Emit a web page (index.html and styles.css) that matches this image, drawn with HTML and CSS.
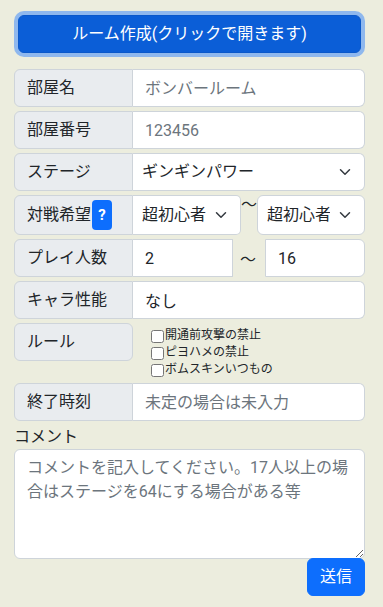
FILE: index.html
```html
<!DOCTYPE html>
<html lang="ja">
<head>
<meta charset="utf-8">
<title>ルーム作成</title>
<link rel="stylesheet" href="styles.css">
</head>
<body>
<div class="container">
  <button class="btn btn-toggle" type="button">ルーム作成(クリックで開きます)</button>
  <form class="form">
    <div class="input-group">
      <span class="group-text">部屋名</span>
      <input class="form-control" type="text" placeholder="ボンバールーム">
    </div>
    <div class="input-group">
      <span class="group-text">部屋番号</span>
      <input class="form-control" type="text" placeholder="123456">
    </div>
    <div class="input-group">
      <span class="group-text">ステージ</span>
      <span class="select-wrap full">
        <select class="form-select"><option>ギンギンパワー</option></select>
        <svg class="chev" viewBox="0 0 16 16" width="16" height="12"><path d="M2 5l6 6 6-6" fill="none" stroke="#343a40" stroke-width="2" stroke-linecap="round" stroke-linejoin="round"/></svg>
      </span>
    </div>
    <div class="input-group tall">
      <span class="group-text">対戦希望<span class="help">?</span></span>
      <span class="select-wrap half">
        <select class="form-select"><option>超初心者</option></select>
        <svg class="chev" viewBox="0 0 16 16" width="16" height="12"><path d="M2 5l6 6 6-6" fill="none" stroke="#343a40" stroke-width="2" stroke-linecap="round" stroke-linejoin="round"/></svg>
      </span>
      <span class="tilde top">〜</span>
      <span class="select-wrap half">
        <select class="form-select"><option>超初心者</option></select>
        <svg class="chev" viewBox="0 0 16 16" width="16" height="12"><path d="M2 5l6 6 6-6" fill="none" stroke="#343a40" stroke-width="2" stroke-linecap="round" stroke-linejoin="round"/></svg>
      </span>
    </div>
    <div class="input-group">
      <span class="group-text">プレイ人数</span>
      <input class="form-control num" type="text" value="2">
      <span class="tilde mid">〜</span>
      <input class="form-control num last" type="text" value="16">
    </div>
    <div class="input-group">
      <span class="group-text">キャラ性能</span>
      <input class="form-control" type="text" value="なし">
    </div>
    <div class="input-group rules">
      <span class="group-text solo">ルール</span>
      <div class="checks">
        <label class="check"><input type="checkbox">開通前攻撃の禁止</label>
        <label class="check"><input type="checkbox">ピヨハメの禁止</label>
        <label class="check"><input type="checkbox">ボムスキンいつもの</label>
      </div>
    </div>
    <div class="input-group">
      <span class="group-text">終了時刻</span>
      <input class="form-control" type="text" placeholder="未定の場合は未入力">
    </div>
    <label class="comment-label">コメント</label>
    <textarea class="form-control area" rows="4" placeholder="コメントを記入してください。17人以上の場合はステージを64にする場合がある等"></textarea>
    <div class="actions">
      <button class="btn btn-send" type="button">送信</button>
    </div>
  </form>
</div>
</body>
</html>
```

FILE: styles.css
```css
* { box-sizing: border-box; }
html, body {
  margin: 0;
  background: #ecedde;
}
body {
  font-family: Roboto, "Noto Sans CJK JP", sans-serif;
  font-size: 16px;
  line-height: 1.5;
  color: #212529;
}
.container {
  padding: 15px 18px 0 14px;
  width: 383px;
}
.btn {
  font: inherit;
  line-height: 24px;
  color: #fff;
  border-radius: 6px;
  padding: 6px 12px;
  cursor: pointer;
}
.btn-toggle {
  display: block;
  width: 343px;
  height: 38px;
  margin: 0 4px 16px 4px;
  background: #0b5ed7;
  border: 1px solid #0a58ca;
  box-shadow: 0 0 0 4px rgba(49, 132, 253, 0.5);
}
.form { width: 351px; }
.input-group {
  display: flex;
  align-items: stretch;
  margin-bottom: 4px;
}
.group-text {
  display: flex;
  align-items: center;
  width: 119px;
  flex: 0 0 119px;
  height: 38px;
  padding: 6px 12px;
  background: #e9ecef;
  border: 1px solid #ced4da;
  border-radius: 6px 0 0 6px;
  white-space: nowrap;
}
.group-text.solo { border-radius: 6px; }
.tall .group-text { height: 40px; }
.help {
  display: inline-flex;
  align-items: center;
  justify-content: center;
  width: 20px;
  height: 30px;
  margin-left: 1px;
  background: #0d6efd;
  color: #fff;
  border-radius: 4px;
  font-size: 15px;
  font-weight: bold;
}
.form-control, .form-select {
  font: inherit;
  line-height: 24px;
  color: #212529;
  background: #fff;
  border: 1px solid #ced4da;
  height: 38px;
  padding: 6px 12px;
}
.form-control::placeholder { color: #6c757d; opacity: 1; }
.input-group > .form-control {
  flex: 1 1 auto;
  min-width: 0;
  border-left: none;
  border-radius: 0 6px 6px 0;
}
.form-control.num {
  flex: 0 0 100px;
  width: 100px;
  border-radius: 0;
}
.form-control.num.last {
  border-left: 1px solid #ced4da;
  border-radius: 0 6px 6px 0;
}
.select-wrap {
  position: relative;
  display: flex;
}
.select-wrap.full { flex: 1 1 auto; }
.select-wrap.half { flex: 0 0 108px; width: 108px; }
.form-select {
  appearance: none;
  -webkit-appearance: none;
  width: 100%;
  height: 100%;
  padding-left: 9px;
  padding-right: 34px;
  border-left: none;
  border-radius: 0 6px 6px 0;
}
.tall .select-wrap.half:last-child .form-select {
  border-left: 1px solid #ced4da;
  border-radius: 6px;
}
.tall .select-wrap.half:nth-child(2) .form-select { border-radius: 0 5px 5px 0; }
.chev {
  position: absolute;
  right: 12px;
  top: 50%;
  margin-top: -6px;
  pointer-events: none;
}
.tilde {
  display: flex;
  justify-content: center;
  font-family: "Noto Sans CJK JP", sans-serif;
}
.tilde.top {
  flex: 0 0 16px;
  align-items: flex-start;
  line-height: 16px;
  font-size: 16px;
}
.tilde.mid {
  flex: 0 0 32px;
  align-items: center;
  padding-right: 2px;
}
.rules { align-items: flex-start; padding-bottom: 0; }
.checks {
  display: flex;
  flex-direction: column;
  padding: 4px 0 1px 18px;
}
.check {
  display: flex;
  align-items: center;
  height: 17px;
  font-size: 12px;
  line-height: 17px;
}
.check input {
  width: 13px;
  height: 13px;
  margin: 2px 1px 0 0;
}
.comment-label {
  display: block;
  height: 24px;
  margin-top: 1px;
}
.area {
  display: block;
  width: 351px;
  height: 110px;
  border-radius: 6px;
  resize: vertical;
}
.actions {
  display: flex;
  justify-content: flex-end;
  margin-top: -1px;
}
.btn-send {
  height: 38px;
  background: #0d6efd;
  border: 1px solid #0d6efd;
}
```
